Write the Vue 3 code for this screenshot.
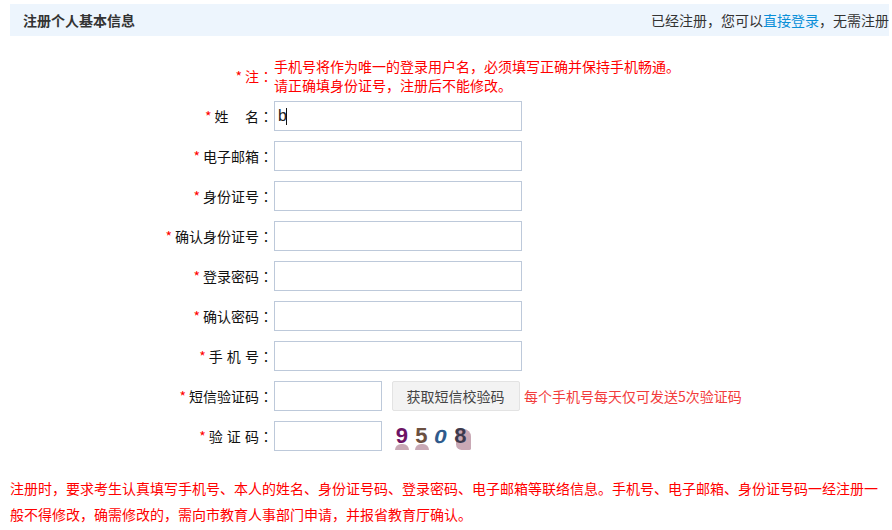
<script setup>
import { ref } from 'vue'

const name = ref('b')

// 表單欄位
const fields = [
  { key: 'email', label: '电子邮箱' },
  { key: 'idcard', label: '身份证号' },
  { key: 'idcard2', label: '确认身份证号' },
  { key: 'pwd', label: '登录密码' },
  { key: 'pwd2', label: '确认密码' },
  { key: 'phone', label: '手 机 号' },
]

const digits = [
  { ch: '9', cls: 'd1' },
  { ch: '5', cls: 'd2' },
  { ch: '0', cls: 'd3' },
  { ch: '8', cls: 'd4' },
]
</script>

<template>
  <div class="page">
    <div class="head">
      <strong>注册个人基本信息</strong>
      <span>已经注册，您可以<a class="link">直接登录</a>，无需注册</span>
    </div>

    <div class="form">
      <div class="row note-row">
        <label class="note-label"><i>*</i>注<em>：</em></label>
        <div class="note">
          手机号将作为唯一的登录用户名，必须填写正确并保持手机畅通。<br />
          请正确填身份证号，注册后不能修改。
        </div>
      </div>

      <div class="row">
        <label><i>*</i>姓&nbsp;&nbsp;&nbsp;&nbsp;名<em>：</em></label>
        <div class="name-wrap">
          <input v-model="name" class="ipt" type="text" />
          <span class="caret"></span>
        </div>
      </div>

      <div v-for="f in fields" :key="f.key" class="row">
        <label><i>*</i>{{ f.label }}<em>：</em></label>
        <input class="ipt" type="text" />
      </div>

      <div class="row">
        <label><i>*</i>短信验证码<em>：</em></label>
        <input class="ipt short" type="text" />
        <button class="sms-btn" type="button">获取短信校验码</button>
        <span class="sms-tip">每个手机号每天仅可发送5次验证码</span>
      </div>

      <div class="row">
        <label><i>*</i>验 证 码<em>：</em></label>
        <input class="ipt short" type="text" />
        <div class="captcha">
          <span v-for="d in digits" :key="d.ch" class="digit" :class="d.cls">{{ d.ch }}</span>
        </div>
      </div>
    </div>

    <p class="foot">
      注册时，要求考生认真填写手机号、本人的姓名、身份证号码、登录密码、电子邮箱等联络信息。手机号、电子邮箱、身份证号码一经注册一般不得修改，确需修改的，需向市教育人事部门申请，并报省教育厅确认。
    </p>
  </div>
</template>

<style>
html,
body {
  margin: 0;
  background: #fff;
}
</style>

<style scoped>
.page {
  width: 892px;
  height: 530px;
  overflow: hidden;
  padding-top: 4px;
  box-sizing: border-box;
  font-family: "Noto Sans CJK SC", "Liberation Sans", sans-serif;
  font-size: 14px;
  color: #222;
}

.head {
  display: flex;
  justify-content: space-between;
  align-items: center;
  height: 32px;
  margin: 0 3px 0 10px;
  padding-left: 13px;
  background: #edf5fd;
  color: #333;
}

.link {
  color: #0a8fd8;
}

.form {
  margin-top: 23px;
}

.row {
  display: flex;
  align-items: center;
  height: 40px;
}

.note-row {
  height: 36px;
  margin-bottom: 1px;
}

.row label {
  width: 274px;
  padding-right: 1px;
  box-sizing: border-box;
  text-align: right;
  white-space: nowrap;
  word-spacing: 1px;
  color: #111;
}

.row label i {
  margin-right: 3px;
  font-style: normal;
  color: #f00;
}

/* 冒號置中 */
.row label em {
  font-family: "Noto Sans CJK TC", sans-serif;
  font-style: normal;
}

.row .note-label {
  margin-bottom: 2px;
  color: #f00;
}

.note {
  margin-top: -3px;
  color: #f00;
  line-height: 19px;
}

.name-wrap {
  position: relative;
  display: flex;
}

.caret {
  position: absolute;
  left: 12px;
  top: 7px;
  width: 1px;
  height: 17px;
  background: #111;
}

.ipt {
  width: 248px;
  height: 30px;
  padding: 0 3px;
  box-sizing: border-box;
  border: 1px solid #bdc9da;
  border-radius: 0;
  outline: none;
  background: #fff;
  font-family: "Liberation Sans", sans-serif;
  font-size: 16px;
  color: #222;
}

.ipt.short {
  width: 108px;
}

.sms-btn {
  width: 128px;
  height: 30px;
  margin-left: 10px;
  padding: 0 1px 0 0;
  border: 1px solid #e3e3e3;
  border-radius: 2px;
  background: #f3f3f3;
  font-family: inherit;
  font-size: 14px;
  color: #444;
}

.sms-tip {
  margin-left: 4px;
  color: #f23c3c;
}

.captcha {
  display: flex;
  align-items: center;
  isolation: isolate;
  width: 78px;
  height: 26px;
  margin-left: 10px;
  font-family: "Liberation Sans", sans-serif;
  font-size: 22px;
  font-weight: 700;
}

.digit {
  position: relative;
  display: block;
  width: 20px;
  text-align: center;
}

.digit::after {
  content: "";
  position: absolute;
  left: 3px;
  bottom: -1px;
  width: 14px;
  height: 6px;
  border-radius: 7px 7px 0 0;
  background: #c9a9b5;
  z-index: -1;
}

.d1 {
  color: #6d1464;
}

.d2 {
  color: #6b5040;
}

/* 0 比較寬、略矮且傾斜 */
.d3 {
  color: #2f5a8c;
  font-size: 19px;
  transform: translateY(1px) scaleX(1.2) skewX(-10deg);
}

.d3::after {
  display: none;
}

.d4 {
  color: #3c3a4e;
}

/* 8 後面的色塊比較大 */
.d4::after {
  left: 5px;
  width: 15px;
  height: 21px;
  border-radius: 8px 8px 2px 6px;
}

.foot {
  width: 872px;
  margin: 19px 0 0 10px;
  line-height: 26px;
  color: #f00;
}
</style>
